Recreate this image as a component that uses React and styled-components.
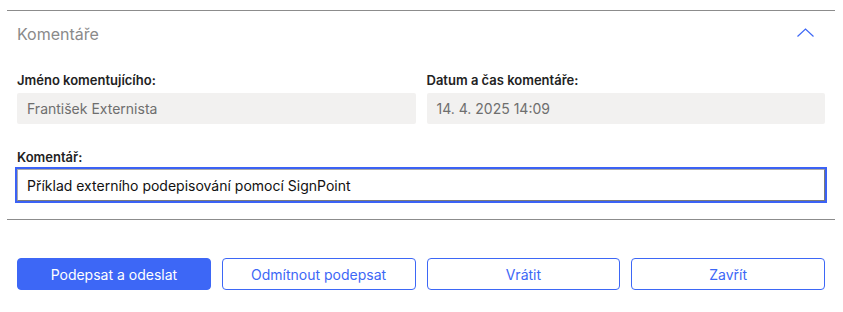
import styled, { createGlobalStyle } from "styled-components";

const GlobalStyle = createGlobalStyle`
  body {
    margin: 0;
    background: #fff;
    font-family: Inter, "Liberation Sans", sans-serif;
  }
`;

const Page = styled.div`
  padding: 10px 8px 0 7px;
`;

const Section = styled.section`
  border-top: 1px solid #8c8c8c;
  border-bottom: 1px solid #8c8c8c;
  padding: 0 10px 18px 10px;
`;

const Header = styled.div`
  display: flex;
  align-items: center;
  justify-content: space-between;
  height: 45px;
  padding-right: 10px;
`;

const Title = styled.h2`
  margin: 0;
  font-size: 16px;
  font-weight: 400;
  color: #8a8a8a;
`;

const Toggle = styled.button`
  border: none;
  background: none;
  padding: 0 1px 2px 0;
  display: flex;
  cursor: pointer;
`;

const Grid = styled.div`
  display: grid;
  grid-template-columns: 1fr 1fr;
  column-gap: 11px;
  margin-top: 16px;
`;

const Field = styled.div`
  display: flex;
  flex-direction: column;
  margin-top: ${(p) => p.$top || 0}px;
`;

const Label = styled.label`
  font-size: 13px;
  font-weight: 600;
  color: #222;
  line-height: 16px;
  margin-bottom: ${(p) => p.$gap || 5}px;
`;

const ReadOnly = styled.div`
  background: #f2f1f0;
  border-radius: 2px;
  height: 31px;
  display: flex;
  align-items: center;
  padding: 0 10px;
  font-size: 14px;
  color: #6e6e6e;
`;

const TextInput = styled.input`
  box-sizing: border-box;
  height: 32px;
  margin: 0;
  border: 1px solid #7a7a7a;
  border-top-color: #aaa;
  border-left-color: #aaa;
  outline: 2px solid #3b62f5;
  outline-offset: 0;
  padding: 0 9px;
  font-family: inherit;
  font-size: 14px;
  color: #111;
`;

const Actions = styled.div`
  display: grid;
  grid-template-columns: repeat(4, 1fr);
  column-gap: 11px;
  padding: 38px 10px 0 10px;
`;

const Button = styled.button`
  height: 32px;
  border-radius: 4px;
  border: 1px solid #3d67f6;
  background: ${(p) => (p.$primary ? "#3d67f6" : "#fff")};
  color: ${(p) => (p.$primary ? "#fff" : "#3d67f6")};
  font-family: inherit;
  font-size: 14px;
  cursor: pointer;
`;

export default function App() {
  return (
    <Page>
      <GlobalStyle />
      <Section>
        <Header>
          <Title>Komentáře</Title>
          <Toggle aria-label="Sbalit">
            <svg width="17" height="9" viewBox="0 0 17 9">
              <path d="M0.5 8.5 L8.5 1 L16.5 8.5" fill="none" stroke="#3d67f6" strokeWidth="1.2" />
            </svg>
          </Toggle>
        </Header>
        <Grid>
          <Field>
            <Label>Jméno komentujícího:</Label>
            <ReadOnly>František Externista</ReadOnly>
          </Field>
          <Field>
            <Label>Datum a čas komentáře:</Label>
            <ReadOnly>14. 4. 2025 14:09</ReadOnly>
          </Field>
        </Grid>
        <Field $top={25}>
          <Label $gap={4}>Komentář:</Label>
          <TextInput defaultValue="Příklad externího podepisování pomocí SignPoint" />
        </Field>
      </Section>
      <Actions>
        <Button $primary>Podepsat a odeslat</Button>
        <Button>Odmítnout podepsat</Button>
        <Button>Vrátit</Button>
        <Button>Zavřít</Button>
      </Actions>
    </Page>
  );
}
